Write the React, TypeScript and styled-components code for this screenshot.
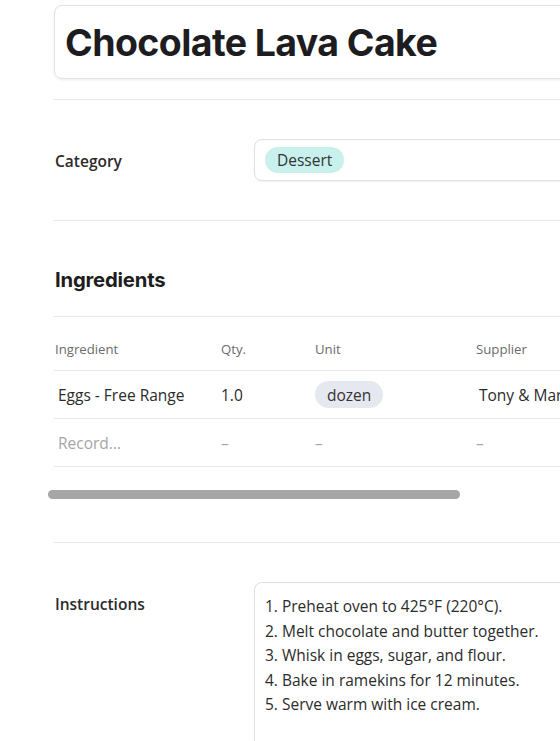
import React from "react";
import styled, { createGlobalStyle } from "styled-components";

const GlobalStyle = createGlobalStyle`
  body {
    margin: 0;
    background: #ffffff;
    overflow: hidden;
    font-family: "Open Sans", "Noto Sans", sans-serif;
    color: #2b2b2b;
  }
`;

const Page = styled.div`
  width: 760px;
  padding: 5px 0 0 54px;
  display: flex;
  flex-direction: column;
`;

const TitleBox = styled.div`
  height: 72px;
  border: 1px solid #e2e2e2;
  border-radius: 8px;
  box-shadow: 0 1px 3px rgba(0, 0, 0, 0.08);
  display: flex;
  align-items: center;
  padding: 0 10px;
`;

const Title = styled.h1`
  margin: 0;
  font-family: Inter, "Liberation Sans", sans-serif;
  font-size: 37.5px;
  font-weight: 700;
  letter-spacing: -0.6px;
  color: #1d1d21;
`;

const Divider = styled.div<{ $top: number; $bottom: number }>`
  height: 1px;
  background: #e9e9e9;
  margin: ${(p) => p.$top}px 0 ${(p) => p.$bottom}px;
`;

const FieldRow = styled.div`
  display: grid;
  grid-template-columns: 200px 1fr;
  align-items: start;
`;

const FieldLabel = styled.div<{ $pt: number }>`
  font-size: 15.5px;
  font-weight: 600;
  color: #2b2b2b;
  padding-top: ${(p) => p.$pt}px;
  padding-left: 1px;
`;

const FieldBox = styled.div<{ $h: number }>`
  height: ${(p) => p.$h}px;
  box-sizing: border-box;
  border: 1px solid #e0e0e0;
  border-radius: 8px;
  box-shadow: 0 1px 2px rgba(0, 0, 0, 0.06);
  padding: 7px 10px;
  display: flex;
  flex-direction: column;
`;

const Pill = styled.span<{ $bg: string }>`
  display: inline-flex;
  align-items: center;
  align-self: flex-start;
  height: 27px;
  padding: 0 12px;
  border-radius: 14px;
  background: ${(p) => p.$bg};
  font-size: 15.5px;
  color: #333;
`;

const SectionTitle = styled.h2`
  margin: 0;
  font-family: Inter, "Liberation Sans", sans-serif;
  font-size: 20.3px;
  font-weight: 700;
  letter-spacing: -0.2px;
  color: #1d1d21;
  line-height: 24px;
  padding-left: 1px;
`;

const Table = styled.div`
  display: flex;
  flex-direction: column;
`;

const Row = styled.div<{ $h: number; $pt?: number }>`
  display: grid;
  grid-template-columns: 166px 94px 161px 1fr;
  align-items: center;
  box-sizing: border-box;
  height: ${(p) => p.$h}px;
  padding: ${(p) => p.$pt ?? 0}px 0 0 1px;
  border-bottom: 1px solid #e6e6e6;
`;

const HeadCell = styled.div`
  font-size: 13.2px;
  color: #6b6b6b;
`;

const Cell = styled.div<{ $muted?: boolean; $inset?: boolean }>`
  font-size: 15.5px;
  white-space: nowrap;
  color: ${(p) => (p.$muted ? "#a5a5a5" : "#2b2b2b")};
  padding-left: ${(p) => (p.$inset ? 3 : 0)}px;
`;

const ScrollTrack = styled.div`
  margin: 23px 0 0 -6px;
  height: 9px;
`;

const ScrollThumb = styled.div`
  width: 412px;
  height: 9px;
  border-radius: 5px;
  background: #a6a6a6;
`;

const Steps = styled.div`
  font-size: 15.5px;
  line-height: 24.5px;
  color: #2b2b2b;
  padding-top: 4px;
`;

const steps = [
  "1. Preheat oven to 425°F (220°C).",
  "2. Melt chocolate and butter together.",
  "3. Whisk in eggs, sugar, and flour.",
  "4. Bake in ramekins for 12 minutes.",
  "5. Serve warm with ice cream.",
];

export default function App() {
  return (
    <>
      <GlobalStyle />
      <Page>
        <TitleBox>
          <Title>Chocolate Lava Cake</Title>
        </TitleBox>
        <Divider $top={20} $bottom={39} />
        <FieldRow>
          <FieldLabel $pt={11}>Category</FieldLabel>
          <FieldBox $h={42}>
            <Pill $bg="#c8f1ed">Dessert</Pill>
          </FieldBox>
        </FieldRow>
        <Divider $top={39} $bottom={47} />
        <SectionTitle>Ingredients</SectionTitle>
        <Divider $top={24} $bottom={0} />
        <Table>
          <Row $h={54} $pt={10}>
            <HeadCell>Ingredient</HeadCell>
            <HeadCell>Qty.</HeadCell>
            <HeadCell>Unit</HeadCell>
            <HeadCell>Supplier</HeadCell>
          </Row>
          <Row $h={48}>
            <Cell $inset>Eggs - Free Range</Cell>
            <Cell>1.0</Cell>
            <Cell>
              <Pill $bg="#e6e8ef">dozen</Pill>
            </Cell>
            <Cell $inset>Tony &amp; Marco's Farm</Cell>
          </Row>
          <Row $h={48}>
            <Cell $muted $inset>Record...</Cell>
            <Cell $muted>–</Cell>
            <Cell $muted>–</Cell>
            <Cell $muted>–</Cell>
          </Row>
        </Table>
        <ScrollTrack>
          <ScrollThumb />
        </ScrollTrack>
        <Divider $top={43} $bottom={39} />
        <FieldRow>
          <FieldLabel $pt={11}>Instructions</FieldLabel>
          <FieldBox $h={200}>
            <Steps>
              {steps.map((s) => (
                <div key={s}>{s}</div>
              ))}
            </Steps>
          </FieldBox>
        </FieldRow>
      </Page>
    </>
  );
}
